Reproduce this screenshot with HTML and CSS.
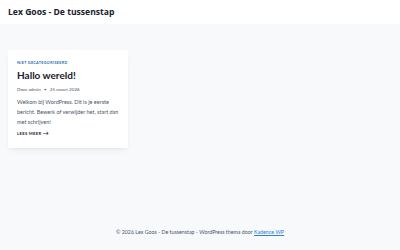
FILE: index.html
```html
<!DOCTYPE html>
<html lang="nl">
<head>
<meta charset="utf-8">
<title>Lex Goos - De tussenstap</title>
<link rel="stylesheet" href="styles.css">
</head>
<body>
<header class="site-header">
  <div class="site-title">Lex Goos - De tussenstap</div>
</header>
<main class="content">
  <article class="card">
    <div class="cat">NIET GECATEGORISEERD</div>
    <h2 class="post-title">Hallo wereld!</h2>
    <div class="meta">Door admin <span class="dot">•</span> 25 maart 2026</div>
    <p class="excerpt">Welkom bij WordPress. Dit is je eerste bericht. Bewerk of verwijder het, start dan met schrijven!</p>
    <div class="more">LEES MEER <span class="arrow">→</span></div>
  </article>
</main>
<footer class="site-footer">
  © 2026 Lex Goos - De tussenstap - WordPress thema door <a href="#" class="link">Kadence WP</a>
</footer>
</body>
</html>
```
FILE: styles.css
```css
html, body {
  margin: 0;
  padding: 0;
}
body {
  width: 400px;
  height: 250px;
  background: #f7f9fb;
  font-family: Lato, "Open Sans", sans-serif;
  color: #2d3748;
  display: flex;
  flex-direction: column;
  overflow: hidden;
}
.site-header {
  background: #ffffff;
  height: 24px;
  display: flex;
  align-items: center;
  padding: 0 8px;
  flex: none;
}
.site-title {
  font-family: "Open Sans", sans-serif;
  font-size: 8.6px;
  font-weight: 700;
  color: #1a202c;
  margin-top: -1px;
}
.content {
  flex: 1;
  padding: 26px 8px 0;
  display: flex;
  align-items: flex-start;
}
.card {
  width: 103px;
  background: #ffffff;
  padding: 10px 8px 11px 9px;
  box-shadow: 0 4px 8px -3px rgba(0,0,0,0.08), 0 1px 2px rgba(0,0,0,0.03);
}
.cat {
  font-size: 3.8px;
  font-weight: 700;
  letter-spacing: 0.3px;
  color: #2b6cb0;
  line-height: 5px;
}
.post-title {
  margin: 3px 0 0;
  font-size: 10px;
  font-weight: 700;
  color: #1a202c;
  line-height: 14px;
}
.meta {
  margin-top: 4px;
  font-size: 4.6px;
  color: #4a5568;
  line-height: 6px;
}
.dot {
  margin: 0 2px;
}
.excerpt {
  margin: 5px 0 0;
  font-size: 5.5px;
  line-height: 10px;
  color: #4a5568;
}
.more {
  margin-top: 3px;
  font-size: 4.2px;
  font-weight: 700;
  letter-spacing: 0.3px;
  color: #1a202c;
  line-height: 6px;
}
.arrow {
  font-size: 6px;
}
.site-footer {
  flex: none;
  height: 22px;
  text-align: center;
  font-size: 5.3px;
  color: #4a5568;
  line-height: 8px;
  box-sizing: border-box;
}
.link {
  color: #3182ce;
  text-decoration: underline;
}
```
